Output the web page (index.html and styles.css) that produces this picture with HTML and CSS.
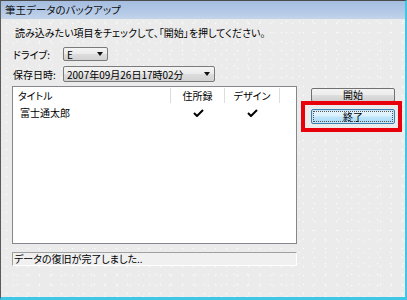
FILE: index.html
```html
<!DOCTYPE html>
<html lang="ja">
<head>
<meta charset="utf-8">
<link rel="stylesheet" href="styles.css">
</head>
<body>
<div class="win">
  <div class="titlebar">筆王データのバックアップ</div>
  <div class="content">
    <p class="instr">読み込みたい項目をチェックして、「開始」を押してください。</p>
    <div class="field drive-row">
      <span class="label">ドライブ:</span>
      <div class="combo combo-drive"><span class="val">E</span><span class="arrow"></span></div>
    </div>
    <div class="field date-row">
      <span class="label">保存日時:</span>
      <div class="combo combo-date"><span class="val">2007年09月26日17時02分</span><span class="arrow"></span></div>
    </div>
    <div class="main">
      <div class="list">
        <div class="lhead">
          <div class="hc hc-title">タイトル</div>
          <div class="hc hc-c">住所録</div>
          <div class="hc hc-c">デザイン</div>
          <div class="hc hc-rest"></div>
        </div>
        <div class="lrow">
          <div class="rc rc-title">富士通太郎</div>
          <div class="rc rc-c"><svg class="chk" viewBox="0 0 11 8" width="11" height="8"><path d="M1 4 L4 7 L10 1" fill="none" stroke="#000" stroke-width="2"/></svg></div>
          <div class="rc rc-c"><svg class="chk" viewBox="0 0 11 8" width="11" height="8"><path d="M1 4 L4 7 L10 1" fill="none" stroke="#000" stroke-width="2"/></svg></div>
          <div class="rc"></div>
        </div>
      </div>
      <div class="buttons">
        <button class="btn">開始</button>
        <button class="btn btn-focus"><span class="focusring">終了</span></button>
      </div>
    </div>
    <div class="status">データの復旧が完了しました..</div>
  </div>
  <div class="highlight"></div>
</div>
</body>
</html>
```

FILE: styles.css
```css
html, body {
  margin: 0;
  padding: 0;
  background: #ececec;
}
.win {
  position: relative;
  width: 407px;
  height: 300px;
  box-sizing: border-box;
  border-top: 1px solid #4a4a4a;
  border-left: 1px solid #5b5b5b;
  border-right: 2px solid #3ec6e6;
  border-bottom: 3px solid #3ec6e6;
  background-color: #ebebeb;
  background-image:
    radial-gradient(circle, #fbfbfb 0.7px, transparent 1.1px),
    radial-gradient(circle, #f8f8f8 0.7px, transparent 1.1px);
  background-size: 11px 9px, 13px 11px;
  background-position: 0 0, 6px 4px;
  font-family: "Noto Sans CJK JP", sans-serif;
  font-size: 10px;
  font-feature-settings: "palt";
  color: #000;
  overflow: hidden;
}
.titlebar {
  height: 18px;
  line-height: 18px;
  padding-left: 4px;
  font-size: 10.5px;
  background: linear-gradient(#a5bde0, #b4c9e6 60%, #c3d4ea);
  color: #111;
}
.content {
  padding: 7px 9px 0 11px;
}
.instr {
  margin: 0;
  padding-left: 3px;
  line-height: 14px;
  height: 14px;
}
.field {
  display: flex;
  align-items: center;
}
.drive-row {
  margin-top: 7px;
  height: 14px;
}
.date-row {
  margin-top: 5px;
  height: 16px;
}
.label {
  width: 50px;
  padding-left: 1px;
}
.combo {
  box-sizing: border-box;
  height: 100%;
  display: flex;
  align-items: center;
  justify-content: space-between;
  border: 1px solid #7a7a7a;
  border-radius: 2px;
  background: linear-gradient(#f4f4f4, #ebebeb 48%, #dddddd 52%, #d2d2d2);
  padding: 0 4px 0 3px;
}
.combo-drive { width: 45px; }
.combo-date { width: 152px; }
.arrow {
  width: 0;
  height: 0;
  border-left: 3px solid transparent;
  border-right: 3px solid transparent;
  border-top: 4px solid #111;
}
.main {
  margin-top: 4px;
  display: flex;
  height: 158px;
}
.list {
  box-sizing: border-box;
  width: 285px;
  height: 158px;
  border: 1px solid #84878c;
  background: #fff;
}
.lhead, .lrow {
  display: grid;
  grid-template-columns: 158px 54px 55px 1fr;
}
.lhead {
  height: 17px;
  align-items: stretch;
}
.hc {
  display: flex;
  align-items: center;
  border-right: 1px solid #dcdcdc;
  margin: 1px 0 2px;
}
.hc-title { padding-left: 5px; }
.hc-c { justify-content: center; }
.hc-rest { border-right: none; }
.lrow {
  height: 17px;
  align-items: center;
}
.rc-title { padding-left: 7px; }
.rc-c {
  display: flex;
  justify-content: center;
}
.chk { display: block; }
.buttons {
  display: flex;
  flex-direction: column;
  margin-left: 14px;
  padding-top: 2px;
  gap: 7px;
}
.btn {
  box-sizing: border-box;
  width: 84px;
  height: 14px;
  padding: 0;
  border: 1px solid #707070;
  border-radius: 2px;
  background: linear-gradient(#f3f3f3, #ececec 48%, #dedede 52%, #d0d0d0);
  font-family: inherit;
  font-size: 10px;
  font-feature-settings: "palt";
  line-height: 12px;
  color: #000;
}
.btn-focus {
  height: 15px;
  border-color: #3c7fb1;
  background: linear-gradient(#eaf6fd, #d9f0fc 48%, #bee6fd 52%, #a7d9f5);
  box-shadow: inset 0 0 0 1px #c7e6f7;
  padding: 1px;
}
.focusring {
  display: block;
  height: 100%;
  box-sizing: border-box;
  border: 1px dotted #555;
  line-height: 10px;
}
.status {
  box-sizing: border-box;
  margin-top: 8px;
  width: 285px;
  height: 14px;
  line-height: 12px;
  padding-left: 1px;
  border-top: 1px solid #a0a0a0;
  border-left: 1px solid #a0a0a0;
  border-right: 1px solid #fff;
  border-bottom: 1px solid #fff;
  background: #f0f0f0;
}
.highlight {
  position: absolute;
  left: 300px;
  top: 100px;
  width: 101px;
  height: 31px;
  box-sizing: border-box;
  border: 4px solid #e8000b;
}
```
